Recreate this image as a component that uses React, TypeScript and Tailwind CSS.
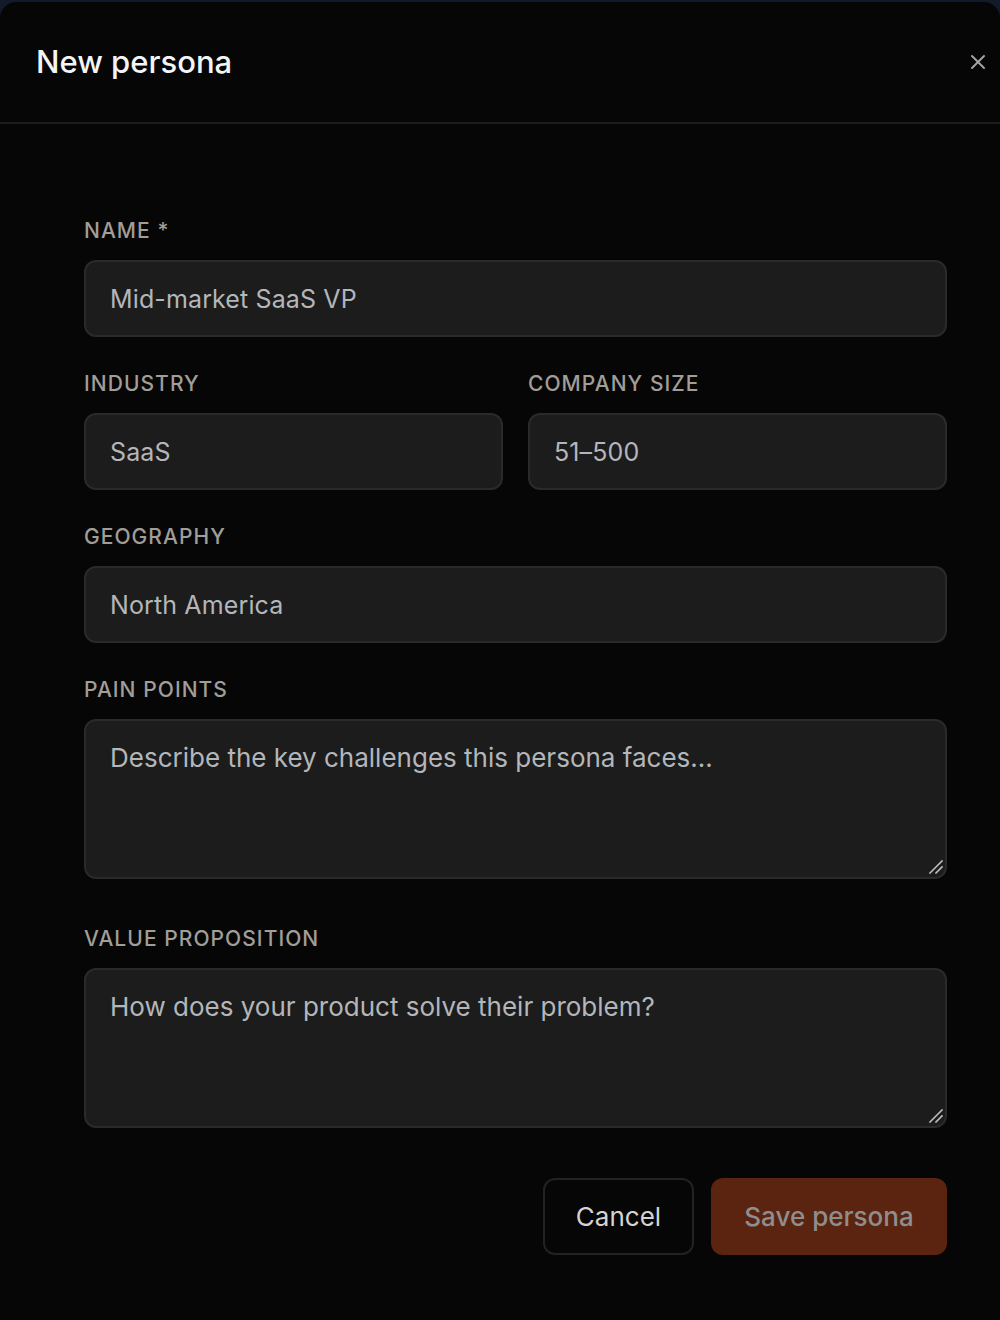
import React from 'react';
import { X } from 'lucide-react';

const Label = ({ children }: { children: React.ReactNode }) => (
  <label className="block text-[21px] leading-[28px] font-medium uppercase tracking-[0.05em] text-[#a19d97] mb-[15px]">
    {children}
  </label>
);

const inputCls =
  'w-full h-[77px] rounded-xl bg-[#1c1c1c] border-2 border-[#2a2a2a] px-[24px] text-[25px] tracking-[0.005em] text-[#c3c7cc] placeholder:text-[#b3b6ba] outline-none';

const areaCls =
  'block w-full h-[160px] resize-none rounded-xl bg-[#1c1c1c] border-2 border-[#2a2a2a] px-[24px] py-[18px] text-[26px] leading-[38px] text-[#c3c7cc] placeholder:text-[#b3b6ba] outline-none';

// textarea with a drawn resize grip in the corner
const Area = ({ placeholder }: { placeholder: string }) => (
  <div className="relative">
    <textarea className={areaCls} placeholder={placeholder} />
    <svg className="absolute right-[4px] bottom-[5px] w-[14px] h-[14px] pointer-events-none" viewBox="0 0 14 14">
      <path d="M13 1 L1 13 M13 7 L7 13" stroke="#bdbdbd" strokeWidth="1.6" strokeLinecap="square" />
    </svg>
  </div>
);

const App = () => {
  return (
    <div className="min-h-screen bg-[#131a2a] pt-[2px]" style={{ fontFamily: 'Inter, "Noto Sans", sans-serif' }}>
      <div className="h-[1318px] bg-[#060606] rounded-t-2xl flex flex-col">
        {/* Header */}
        <div className="h-[122px] flex items-center justify-between pl-9 pr-[10px] border-b-2 border-[#1c1c1c]">
          <h2 className="text-[31px] font-medium text-[#f3f4f6]">New persona</h2>
          <button className="text-[#a3a3a3]" aria-label="Close">
            <X className="h-6 w-6" strokeWidth={2} />
          </button>
        </div>

        {/* Body */}
        <div className="px-[84px] pt-[93px] pr-[53px]">
          <div className="mb-[33px]">
            <Label>Name *</Label>
            <input className={inputCls} placeholder="Mid-market SaaS VP" />
          </div>

          <div className="grid grid-cols-2 gap-[25px] mb-[33px]">
            <div>
              <Label>Industry</Label>
              <input className={inputCls} placeholder="SaaS" />
            </div>
            <div>
              <Label>Company size</Label>
              <input className={inputCls} placeholder="51–500" />
            </div>
          </div>

          <div className="mb-[33px]">
            <Label>Geography</Label>
            <input className={inputCls} placeholder="North America" />
          </div>

          <div className="mb-[46px]">
            <Label>Pain points</Label>
            <Area placeholder="Describe the key challenges this persona faces..." />
          </div>

          <div className="mb-[50px]">
            <Label>Value proposition</Label>
            <Area placeholder="How does your product solve their problem?" />
          </div>

          <div className="flex justify-end gap-[17px]">
            <button className="w-[151px] h-[77px] rounded-xl border-2 border-[#222222] text-[26px] text-[#d4d4d4]">
              Cancel
            </button>
            <button className="w-[236px] h-[77px] rounded-xl bg-[#5b2410] text-[26px] font-medium text-[#8e8e8e]">
              Save persona
            </button>
          </div>
        </div>
      </div>
    </div>
  );
};

export default App;
